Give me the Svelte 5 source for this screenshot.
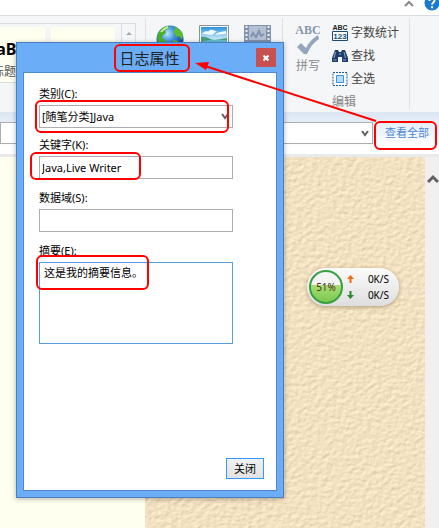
<script lang="ts">
	let category = $state('java');
	let keywords = $state('Java,Live Writer');
	let dataField = $state('');
	let summary = $state('这是我的摘要信息。');

	// red call-outs drawn over the windows
	const marks = [
		{ x: 115, y: 45, w: 74, h: 26 },
		{ x: 36, y: 101, w: 192, h: 31 },
		{ x: 31, y: 153, w: 109, h: 26 },
		{ x: 37, y: 256, w: 111, h: 33 },
		{ x: 375, y: 122, w: 61, h: 27 }
	];
</script>

<div class="desktop">
	<header class="tabs">
		<button class="plain" aria-label="折叠功能区">
			<svg width="10" height="8" viewBox="0 0 10 8"><path d="M1 6l4-4 4 4" fill="none" stroke="#85888c" stroke-width="2" /></svg>
		</button>
		<button class="plain" aria-label="帮助">
			<svg width="16" height="16" viewBox="0 0 16 16">
				<circle cx="8" cy="8" r="7.5" fill="#1979ca" />
				<path d="M5.5 6c0-3.4 5-3.4 5-.4 0 2-2.4 2-2.4 4.2M8.1 11.2v2" fill="none" stroke="#fff" stroke-width="2" />
			</svg>
		</button>
	</header>

	<div class="ribbon">
		<div class="gallery">
			<button class="style first"><b>AaBbCc</b><span>标题</span></button>
			<button class="style"><b>AaBbCc</b><span>标题 2</span></button>
			<button class="scroll" aria-label="向上滚动">
				<svg width="6" height="3" viewBox="0 0 6 3"><path d="M0 3l3-3 3 3z" fill="#a3a9b3" /></svg>
			</button>
		</div>

		<div class="group inserts">
			<button class="plain" aria-label="超链接">
				<svg width="28" height="28" viewBox="0 0 28 28">
					<defs>
						<radialGradient id="sea" cx=".4" cy=".3" r=".75">
							<stop offset="0" stop-color="#b8e6fa" />
							<stop offset=".4" stop-color="#3c8ddb" />
							<stop offset="1" stop-color="#082f83" />
						</radialGradient>
					</defs>
					<circle cx="14" cy="14" r="13.5" fill="url(#sea)" />
					<path d="M2 9c2-5 6-8 11-8l-1 3-3 1 1 3-3 2-1 3 3 2 2 4-2 5C4 21 0 15 2 9z" fill="#49ae28" />
					<path d="M18 2c4 1 8 4 9 8l-1 5-3-4-3 1-1-3-2-2 2-2z" fill="#5bbd2c" />
					<path d="M17 15l5 1-1 5-4 4z" fill="#5bbd2c" />
					<path d="M5 7c2-3 4-4 7-5" stroke="#c7ed97" stroke-width="2" fill="none" />
				</svg>
			</button>
			<button class="plain" aria-label="图片">
				<svg width="30" height="26" viewBox="0 0 30 26">
					<defs>
						<linearGradient id="sky" x2="0" y2="1">
							<stop offset="0" stop-color="#2e91dc" />
							<stop offset=".6" stop-color="#d5f2fb" />
						</linearGradient>
					</defs>
					<path d="M.5.5h29v25H.5z" fill="#fff" stroke="#8c9299" />
					<path d="M2 2h26v22H2z" fill="url(#sky)" />
					<path d="M3 9c3-4 6-2 7-3 3-3 5 1 8 0l-5 4zM16 10c4-4 7-3 11-4v3z" fill="#eefaff" />
					<path d="M2 12c6-1 9 3 14 3l12-2v11H2z" fill="#4a9d7c" />
					<path d="M2 17c9-3 15-2 26-2v9H2z" fill="#65bfd2" />
				</svg>
			</button>
			<button class="plain" aria-label="视频">
				<svg width="27" height="28" viewBox="0 0 27 28">
					<path d="M0 0h27v28H0z" fill="#8292ad" />
					<path d="M5 1h17v14H5zM5 17h17v10H5z" fill="#b3c0d4" />
					<path d="M2.5 1v26M24.5 1v26" stroke="#eef2f7" stroke-width="2" stroke-dasharray="2 2" />
					<path d="M7 12l2-4 3 4 3-6 2 5 3-2M8 23c0-6 10-6 10 0M10 20l4-2 4 3" fill="none" stroke="#8193af" stroke-width="2" />
				</svg>
			</button>
		</div>

		<div class="group editing">
			<div class="tools">
				<button class="spell" disabled>
					<svg width="26" height="32" viewBox="0 0 26 32">
						<text x="13" y="9" text-anchor="middle" class="abc">ABC</text>
						<path d="M2 22l4-4 5 5c3-6 7-10 12-13l1 4c-5 3-9 8-12 15h-3z" fill="#94a5c0" />
					</svg>
					<span>拼写</span>
				</button>
				<div class="list">
					<button>
						<svg width="16" height="18" viewBox="0 0 16 18">
							<text x="8" y="6" text-anchor="middle" class="tiny">ABC</text>
							<path d="M.5 7.500h15v9H.5z" fill="#f8fcff" stroke="#174c78" />
							<text x="8" y="15" text-anchor="middle" class="digits">123</text>
						</svg>
						字数统计
					</button>
					<button>
						<svg width="16" height="14" viewBox="0 0 16 14">
							<path d="M3 1h3l1 2h2l1-2h3l3 8v4h-6V8H6v5H0V9z" fill="#1d3c68" />
							<path d="M3.500 3L2 9M12 3l1.500 6M1.500 11h3M11 11h3M7 5h2" stroke="#91acd0" fill="none" />
						</svg>
						查找
					</button>
					<button>
						<svg width="16" height="16" viewBox="0 0 16 16">
							<path d="M1 1.500h14v13H1z" fill="#fff" stroke="#1b5794" stroke-dasharray="2 1" />
							<path d="M4.500 4.500h7v7h-7z" fill="#b3dcff" stroke="#3a91e4" />
						</svg>
						全选
					</button>
				</div>
			</div>
			<div class="caption">编辑</div>
		</div>
	</div>

	<div class="filter">
		<div class="picker">
			<select aria-label="分类"><option></option></select>
			<svg class="chevron" width="8" height="7" viewBox="0 0 8 7"><path d="M1 1l3 4 3-4" fill="none" stroke="#606060" stroke-width="2" /></svg>
		</div>
		<a href="#all">查看全部</a>
	</div>

	<main class="editor">
		<div class="margin"></div>
		<svg class="paper" aria-hidden="true">
			<filter id="grain" x="0" y="0" width="100%" height="100%" color-interpolation-filters="sRGB">
				<feTurbulence type="fractalNoise" baseFrequency=".2 .25" numOctaves="2" seed="4" />
				<feDiffuseLighting surfaceScale=".5" diffuseConstant="1.1" lighting-color="#f0dfbf">
					<feDistantLight azimuth="235" elevation="67" />
				</feDiffuseLighting>
			</filter>
			<rect width="100%" height="100%" filter="url(#grain)" />
		</svg>
		<div class="scrollbar">
			<svg width="12" height="10" viewBox="0 0 12 10"><path d="M1 8l5-5 5 5" fill="none" stroke="#606060" stroke-width="3" /></svg>
		</div>
	</main>

	<div class="meter">
		<div class="ball">51%</div>
		<div class="rates">
			<div>
				<svg width="7" height="8" viewBox="0 0 7 8"><path d="M3.500 0L7 4H4.500v4h-2V4H0z" fill="#f56a0a" /></svg>
				<span>0K/S</span>
			</div>
			<div>
				<svg width="7" height="8" viewBox="0 0 7 8"><path d="M3.500 8L0 4h2.500V0h2v4H7z" fill="#238a25" /></svg>
				<span>0K/S</span>
			</div>
		</div>
	</div>

	<div class="dialog" role="dialog" aria-labelledby="title">
		<div class="titlebar">
			<h1 id="title">日志属性</h1>
			<button class="close" aria-label="关闭窗口">
				<svg width="6" height="6" viewBox="0 0 6 6"><path d="M.5.5l5 5M5.500.5l-5 5" stroke="#fff" stroke-width="2" /></svg>
			</button>
		</div>
		<form>
			<label for="category">类别(C):</label>
			<div class="picker field">
				<select id="category" bind:value={category}>
					<option value="java">[随笔分类]Java</option>
				</select>
				<svg class="chevron" width="8" height="7" viewBox="0 0 8 7"><path d="M1 1l3 4 3-4" fill="none" stroke="#606060" stroke-width="2" /></svg>
			</div>
			<label for="keywords">关键字(K):</label>
			<input id="keywords" class="field" bind:value={keywords} />
			<label for="data">数据域(S):</label>
			<input id="data" class="field" bind:value={dataField} />
			<label for="summary">摘要(E):</label>
			<textarea id="summary" bind:value={summary}></textarea>
			<button type="button" class="ok">关闭</button>
		</form>
	</div>

	<svg class="marks" aria-hidden="true">
		{#each marks as m}
			<rect x={m.x} y={m.y} width={m.w} height={m.h} rx="5" />
		{/each}
		<path d="M376 121L205 66" />
		<path class="head" d="M195 63l14-1-3 8z" />
	</svg>
</div>

<style>
	:global(body) {
		margin: 0;
	}
	.desktop {
		position: relative;
		display: flex;
		flex-direction: column;
		min-height: 100vh;
		overflow: hidden;
		background: #fff;
		color: #000;
		font: 12px/16px 'Noto Sans', 'Noto Sans CJK SC', sans-serif;
	}
	button,
	input,
	select,
	textarea {
		box-sizing: border-box;
		margin: 0;
		font: inherit;
		color: inherit;
	}
	svg {
		display: block;
		flex: none;
	}
	.plain {
		padding: 0;
		border: 0;
		background: none;
	}
	.tabs {
		display: flex;
		justify-content: flex-end;
		align-items: flex-end;
		gap: 10px;
		height: 11px;
		margin-right: -1px;
		padding-bottom: 4px;
	}
	.tabs .plain:first-child {
		align-self: flex-start;
	}

	.ribbon {
		display: flex;
		height: 96px;
		border-top: 1px solid #d9dcdf;
		background: #f5f6f7;
	}
	.gallery {
		display: flex;
		align-self: flex-start;
		box-sizing: border-box;
		height: 60px;
		margin: 7px 9px 0 0;
		border: 1px solid #d9dce0;
		border-left: 0;
		overflow: hidden;
	}
	.style {
		display: flex;
		flex-direction: column;
		align-items: center;
		justify-content: flex-end;
		gap: 4px;
		width: 64px;
		margin: 3px 6px 0 0;
		padding: 0 0 2px;
		border: 0;
		background: #fffff0;
		overflow: hidden;
	}
	.style b {
		font-size: 16px;
		line-height: 22px;
	}
	.style span {
		color: #555;
	}
	.style.first {
		width: 45px;
		align-items: flex-end;
	}
	.style.first span {
		align-self: flex-start;
		margin-left: -8px;
	}
	.scroll {
		display: flex;
		justify-content: center;
		width: 14px;
		padding: 8px 0;
		border: 0;
		border-left: 1px solid #d9dce0;
		background: #f5f6f7;
	}
	.group {
		margin: 2px 0 3px;
		border-left: 1px solid #dfe1e4;
	}
	.inserts {
		display: flex;
		align-items: flex-start;
		gap: 15px;
		width: 126px;
		padding: 7px 0 0 10px;
		box-sizing: border-box;
		margin-right: 11px;
	}
	.editing {
		width: 126px;
		border-right: 1px solid #dfe1e4;
	}
	.tools {
		display: flex;
		gap: 11px;
		padding: 3px 0 0 12px;
	}
	.tools button {
		display: flex;
		align-items: center;
		gap: 3px;
		padding: 0;
		border: 0;
		background: none;
		color: #444;
		white-space: nowrap;
	}
	.tools .spell {
		flex-direction: column;
		gap: 1px;
		align-self: flex-start;
		padding-top: 4px;
		color: #8b8b8b;
	}
	.list button {
		height: 23px;
	}
	.caption {
		margin: 4px 0 0 49px;
		color: #858585;
	}
	.abc {
		font: bold 12px 'Liberation Serif', serif;
		fill: #8796ae;
	}
	.tiny {
		font: bold 7px 'Liberation Sans', sans-serif;
		fill: #222;
	}
	.digits {
		font: bold 8px 'Liberation Sans', sans-serif;
		fill: #174c78;
	}

	.filter {
		display: flex;
		align-items: center;
		gap: 12px;
		box-sizing: border-box;
		height: 45px;
		padding: 4px 10px 4px 0;
		border-bottom: 3px solid #e9eaec;
		background: linear-gradient(#dbe6f3, #fff 85%);
	}
	.filter a {
		color: #4b87dd;
		font-size: 11px;
		text-decoration: none;
		white-space: nowrap;
	}
	.picker {
		position: relative;
		flex: 1;
	}
	.picker select {
		display: block;
		width: 100%;
		height: 22px;
		padding: 0 2px;
		border: 1px solid #abadb3;
		border-radius: 0;
		background: #fff;
		appearance: none;
	}
	.chevron {
		position: absolute;
		right: 4px;
		top: 8px;
		pointer-events: none;
	}

	.editor {
		display: flex;
		flex: 1;
	}
	.margin {
		width: 145px;
		background: #fffff0;
	}
	.paper {
		flex: 1;
		height: auto;
		min-width: 0;
	}
	.scrollbar {
		width: 12px;
		padding: 17px 0 0 2px;
		background: #f0f0f0;
	}

	.meter {
		position: absolute;
		left: 307px;
		top: 268px;
		display: flex;
		align-items: center;
		gap: 4px;
		box-sizing: border-box;
		height: 38px;
		padding: 0 10px 0 2px;
		border-radius: 19px;
		background: linear-gradient(#fbfbfb, #dedede);
		box-shadow: 0 1px 4px #a89877;
		font-size: 10px;
	}
	.ball {
		box-sizing: border-box;
		width: 34px;
		height: 34px;
		border: 2px solid #36a042;
		border-radius: 50%;
		background: linear-gradient(#f4f4f4 42%, #a7df75 42%, #7cc84e);
		color: #522d17;
		line-height: 30px;
		text-align: center;
	}
	.rates div {
		display: flex;
		align-items: center;
		justify-content: space-between;
		width: 42px;
	}

	.dialog {
		position: absolute;
		left: 16px;
		top: 42px;
		box-sizing: border-box;
		width: 268px;
		padding: 0 6px 6px;
		border: 1px solid #4a7fbd;
		background: #6badf6;
		box-shadow: 0 1px 5px rgba(0, 0, 0, 0.3);
		font-size: 11px;
	}
	.titlebar {
		display: flex;
		align-items: center;
		justify-content: flex-end;
		height: 29px;
	}
	.titlebar h1 {
		flex: 1;
		margin: 0 0 0 20px;
		color: #222;
		font-size: 15px;
		font-weight: 400;
		text-align: center;
	}
	.close {
		display: flex;
		align-items: center;
		justify-content: center;
		width: 20px;
		height: 19px;
		margin-right: 1px;
		padding: 0;
		border: 0;
		background: #c75050;
	}
	form {
		display: flex;
		flex-direction: column;
		box-sizing: border-box;
		height: 419px;
		padding: 13px 43px 11px 15px;
		border: 1px solid #5089cc;
		background: #fff;
	}
	.field {
		flex: none;
		height: 23px;
		margin: 3px 0 9px;
	}
	.field select {
		height: 23px;
	}
	input.field {
		padding: 0 2px;
		border: 1px solid #abadb3;
		margin-bottom: 11px;
	}
	textarea {
		height: 82px;
		margin-top: 3px;
		padding: 2px 4px;
		border: 1px solid #569de5;
		resize: none;
	}
	.ok {
		align-self: flex-end;
		width: 38px;
		height: 21px;
		margin: auto -31px 0 0;
		padding: 0;
		border: 1px solid #3399ff;
		background: linear-gradient(#f2f2f2, #e2e2e2);
	}

	.marks {
		position: absolute;
		inset: 0;
		width: 100%;
		height: 100%;
		fill: none;
		stroke: #f00;
		stroke-width: 2;
		pointer-events: none;
	}
	.marks .head {
		fill: #f00;
		stroke: none;
	}
</style>
